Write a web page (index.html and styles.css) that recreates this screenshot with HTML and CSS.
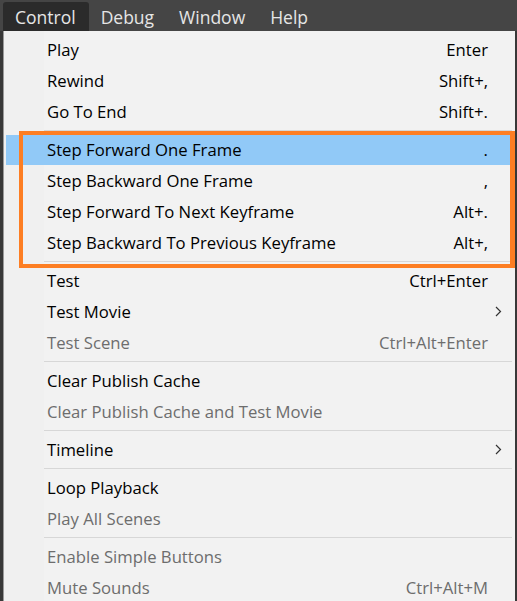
FILE: index.html
```html
<!DOCTYPE html>
<html>
<head>
<meta charset="utf-8">
<link rel="stylesheet" href="styles.css">
</head>
<body>
<div class="menubar">
  <span class="top-item open">Control</span>
  <span class="top-item">Debug</span>
  <span class="top-item">Window</span>
  <span class="top-item">Help</span>
</div>
<div class="menu">
  <div class="row"><span class="label">Play</span><span class="key">Enter</span><span class="sub"></span></div>
  <div class="row"><span class="label">Rewind</span><span class="key">Shift+,</span><span class="sub"></span></div>
  <div class="row"><span class="label">Go To End</span><span class="key">Shift+.</span><span class="sub"></span></div>
  <div class="sep"></div>
  <div class="group">
    <div class="row active"><span class="label">Step Forward One Frame</span><span class="key">.</span><span class="sub"></span></div>
    <div class="row"><span class="label">Step Backward One Frame</span><span class="key">,</span><span class="sub"></span></div>
    <div class="row"><span class="label">Step Forward To Next Keyframe</span><span class="key">Alt+.</span><span class="sub"></span></div>
    <div class="row"><span class="label">Step Backward To Previous Keyframe</span><span class="key">Alt+,</span><span class="sub"></span></div>
  </div>
  <div class="sep"></div>
  <div class="row"><span class="label">Test</span><span class="key">Ctrl+Enter</span><span class="sub"></span></div>
  <div class="row"><span class="label">Test Movie</span><span class="key"></span><span class="sub"><svg width="7" height="11" viewBox="0 0 7 11"><path d="M1 1 L5.5 5.5 L1 10" fill="none" stroke="#333" stroke-width="1.2"/></svg></span></div>
  <div class="row disabled"><span class="label">Test Scene</span><span class="key">Ctrl+Alt+Enter</span><span class="sub"></span></div>
  <div class="sep"></div>
  <div class="row"><span class="label">Clear Publish Cache</span><span class="key"></span><span class="sub"></span></div>
  <div class="row disabled"><span class="label">Clear Publish Cache and Test Movie</span><span class="key"></span><span class="sub"></span></div>
  <div class="sep"></div>
  <div class="row"><span class="label">Timeline</span><span class="key"></span><span class="sub"><svg width="7" height="11" viewBox="0 0 7 11"><path d="M1 1 L5.5 5.5 L1 10" fill="none" stroke="#333" stroke-width="1.2"/></svg></span></div>
  <div class="sep"></div>
  <div class="row"><span class="label">Loop Playback</span><span class="key"></span><span class="sub"></span></div>
  <div class="row disabled"><span class="label">Play All Scenes</span><span class="key"></span><span class="sub"></span></div>
  <div class="sep"></div>
  <div class="row disabled"><span class="label">Enable Simple Buttons</span><span class="key"></span><span class="sub"></span></div>
  <div class="row disabled"><span class="label">Mute Sounds</span><span class="key">Ctrl+Alt+M</span><span class="sub"></span></div>
</div>
</body>
</html>
```

FILE: styles.css
```css
html, body {
  margin: 0;
  padding: 0;
}
body {
  width: 517px;
  height: 601px;
  overflow: hidden;
  background: #383838;
  font-family: "Open Sans", "Noto Sans", sans-serif;
}
.menubar {
  height: 31px;
  background: #454545;
  display: flex;
  align-items: flex-end;
  padding-left: 3px;
  box-sizing: border-box;
}
.top-item {
  height: 29px;
  line-height: 30px;
  padding: 0 13px 0 12px;
  color: #e6e6e6;
  font-size: 17.5px;
  border-radius: 3px 3px 0 0;
}
.top-item.open {
  background: #2b2b2b;
}
.menu {
  margin-left: 3px;
  width: 512px;
  height: 570px;
  box-sizing: border-box;
  padding-top: 4px;
  background: linear-gradient(to right, #f0f0f0 40px, #f2f2f2 40px);
  border-left: 1px solid #9a9a9a;
  overflow: hidden;
}
.row {
  display: grid;
  grid-template-columns: 1fr auto 27px;
  align-items: center;
  height: 31px;
  box-sizing: border-box;
  padding-bottom: 3px;
  margin: 0 0 0 2px;
  padding-left: 41px;
  font-size: 16.7px;
  color: #000;
}
.row.active {
  background: linear-gradient(#91c9f7, #91c9f7) 0 0 / 100% 30px no-repeat;
}
.row.disabled {
  color: #6d6d6d;
}
.key {
  text-align: right;
}
.sub {
  display: flex;
  justify-content: center;
  padding-right: 6px;
}
.sep {
  height: 1px;
  background: #d7d7d7;
  margin: 2px 3px 4px 40px;
}
.group {
  position: relative;
}
.group::after {
  content: "";
  position: absolute;
  left: 15px;
  right: 0;
  top: -4px;
  bottom: -9px;
  border: 4px solid #fd7e23;
  border-right-width: 5px;
  pointer-events: none;
}
```
